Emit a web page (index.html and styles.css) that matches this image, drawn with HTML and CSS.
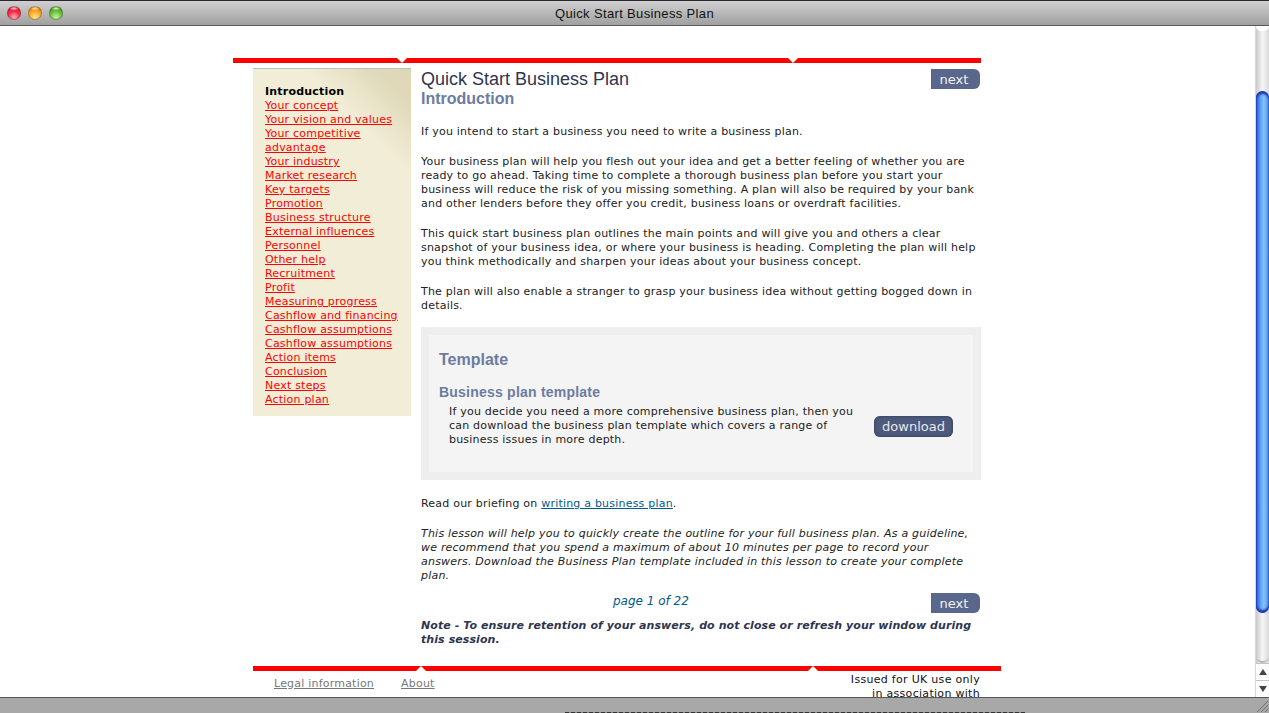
FILE: index.html
```html
<!DOCTYPE html>
<html lang="en">
  <head>
    <meta charset="UTF-8" />
    <title>Quick Start Business Plan</title>
    <link rel="stylesheet" href="styles.css">
  </head>
  <body>
    <header class="titlebar">
      <div class="traffic">
        <span class="light light-red"></span>
        <span class="light light-amber"></span>
        <span class="light light-green"></span>
      </div>
      <div class="window-title">Quick Start Business Plan</div>
    </header>

    <div class="viewport">
      <div class="page">
        <div class="rule rule-top">
          <span class="notch notch-down notch-a"></span>
          <span class="notch notch-down notch-b"></span>
        </div>

        <div class="columns">
          <nav class="sidebar">
            <div class="current">Introduction</div>
            <a href="#">Your concept</a>
            <a href="#">Your vision and values</a>
            <a href="#">Your competitive advantage</a>
            <a href="#">Your industry</a>
            <a href="#">Market research</a>
            <a href="#">Key targets</a>
            <a href="#">Promotion</a>
            <a href="#">Business structure</a>
            <a href="#">External influences</a>
            <a href="#">Personnel</a>
            <a href="#">Other help</a>
            <a href="#">Recruitment</a>
            <a href="#">Profit</a>
            <a href="#">Measuring progress</a>
            <a href="#">Cashflow and financing</a>
            <a href="#">Cashflow assumptions</a>
            <a href="#">Cashflow assumptions</a>
            <a href="#">Action items</a>
            <a href="#">Conclusion</a>
            <a href="#">Next steps</a>
            <a href="#">Action plan</a>
          </nav>

          <main class="content">
            <div class="content-head">
              <div class="headings">
                <h1>Quick Start Business Plan</h1>
                <h2>Introduction</h2>
              </div>
              <a href="#" class="next-button">next</a>
            </div>

            <p class="first">If you intend to start a business you need to write a business plan.</p>
            <p>Your business plan will help you flesh out your idea and get a better feeling of whether you are ready to go ahead. Taking time to complete a thorough business plan before you start your business will reduce the risk of you missing something. A plan will also be required by your bank and other lenders before they offer you credit, business loans or overdraft facilities.</p>
            <p>This quick start business plan outlines the main points and will give you and others a clear snapshot of your business idea, or where your business is heading. Completing the plan will help you think methodically and sharpen your ideas about your business concept.</p>
            <p>The plan will also enable a stranger to grasp your business idea without getting bogged down in details.</p>

            <section class="template-box">
              <div class="template-inner">
                <h3>Template</h3>
                <h4>Business plan template</h4>
                <div class="template-row">
                  <p class="template-text">If you decide you need a more comprehensive business plan, then you can download the business plan template which covers a range of business issues in more depth.</p>
                  <a href="#" class="download-button">download</a>
                </div>
              </div>
            </section>

            <p class="briefing">Read our briefing on <a href="#" class="blue-link">writing a business plan</a>.</p>
            <p class="lesson">This lesson will help you to quickly create the outline for your full business plan. As a guideline, we recommend that you spend a maximum of about 10 minutes per page to record your answers. Download the Business Plan template included in this lesson to create your complete plan.</p>

            <div class="pager">
              <span class="page-count">page 1 of 22</span>
              <a href="#" class="next-button">next</a>
            </div>
            <p class="note">Note - To ensure retention of your answers, do not close or refresh your window during this session.</p>
          </main>
        </div>

        <footer class="footer">
          <div class="rule rule-bottom">
            <span class="notch notch-up notch-c"></span>
            <span class="notch notch-up notch-d"></span>
          </div>
          <div class="footer-row">
            <div class="footer-links">
              <a href="#">Legal information</a>
              <a href="#">About</a>
            </div>
            <div class="issued">Issued for UK use only<br>in association with</div>
          </div>
        </footer>
      </div>

      <div class="scrollbar">
        <div class="track">
          <div class="track-cap"></div>
          <div class="thumb"></div>
          <div class="track-end"></div>
        </div>
        <div class="arrow-btn"><span class="arrow-up"></span></div>
        <div class="arrow-btn"><span class="arrow-down"></span></div>
      </div>
    </div>

    <div class="statusbar">
      <div class="peek"></div>
      <svg class="grip" width="12" height="12" viewBox="0 0 12 12">
        <path d="M1 12L12 1M5 12L12 5M9 12L12 9" stroke="#6f6f6f" stroke-width="1" fill="none" />
      </svg>
    </div>
  </body>
</html>
```

FILE: styles.css
```css
* {
  margin: 0;
  padding: 0;
  box-sizing: border-box;
}

html,
body {
  height: 100%;
  overflow: hidden;
}

body {
  display: flex;
  flex-direction: column;
  background: #fff;
  color: #222;
  font-family: "DejaVu Sans", Verdana, sans-serif;
  font-size: 11px;
  line-height: 14px;
  letter-spacing: 0.21px;
}

/* window chrome */
.titlebar {
  position: relative;
  height: 26px;
  flex: none;
  display: flex;
  align-items: center;
  justify-content: center;
  background: linear-gradient(#d0d0d0, #a0a0a0);
  border-top: 1px solid #2a2433;
  border-bottom: 1px solid #55565a;
}

.window-title {
  font-family: "Liberation Sans", Arial, sans-serif;
  font-size: 13px;
  color: #111;
  letter-spacing: 0.35px;
  margin-top: 1px;
}

.traffic {
  position: absolute;
  left: 7px;
  top: 5px;
  display: flex;
  gap: 7px;
}

.light {
  width: 14px;
  height: 14px;
  border-radius: 50%;
  border: 1px solid rgba(70, 70, 70, 0.4);
}

.light-red {
  background: radial-gradient(ellipse 5px 2px at 50% 12%, #ffd0d8, transparent),
    radial-gradient(circle at 50% 85%, #ffb0b8 0, #ff2a4a 50%, #d0102c 90%);
}

.light-amber {
  background: radial-gradient(ellipse 5px 2px at 50% 12%, #ffe6b0, transparent),
    radial-gradient(circle at 50% 85%, #ffe98a 0, #fba21f 55%, #d07a10 90%);
}

.light-green {
  background: radial-gradient(ellipse 5px 2px at 50% 12%, #d8f5c0, transparent),
    radial-gradient(circle at 50% 85%, #c6f09a 0, #62bb34 55%, #3f8f22 90%);
}

.viewport {
  flex: 1;
  min-height: 0;
  display: flex;
  overflow: hidden;
}

.statusbar {
  position: relative;
  height: 16px;
  flex: none;
  background: #a8a8a8;
  border-top: 1px solid #55565a;
}

/* sliver of whatever sits behind the window */
.peek {
  position: absolute;
  left: 565px;
  bottom: 0;
  width: 460px;
  height: 1px;
  background: repeating-linear-gradient(90deg, #333 0, #333 4px, #8a8a8a 4px, #8a8a8a 6px);
}

.grip {
  position: absolute;
  right: 1px;
  bottom: 1px;
}

/* scrollbar */
.scrollbar {
  width: 14px;
  margin-left: auto;
  flex: none;
  display: flex;
  flex-direction: column;
  background: #fff;
  border-left: 1px solid #d8d8d8;
}

.track {
  flex: 1;
  display: flex;
  flex-direction: column;
  background: linear-gradient(90deg, #c9c9c9, #f6f6f6 50%, #d8d8d8);
}

.track-cap {
  height: 5px;
  background: #fff;
  border-radius: 0 0 6px 6px;
}

.thumb {
  height: 522px;
  margin-top: 60px;
  border-radius: 7px;
  background: linear-gradient(90deg, #2a4ed0, #5aa4f4 35%, #86c2fa 60%, #4a90ec);
  box-shadow: inset 0 3px 2px #2437b0, inset 0 -3px 2px #2437b0;
}

.track-end {
  flex: 1;
  border-radius: 0 0 7px 7px;
  border-bottom: 2px solid #b8b8b8;
}

.arrow-btn {
  height: 17px;
  display: flex;
  align-items: center;
  justify-content: center;
  border-top: 1px solid #c4c4c4;
}

.arrow-up {
  border: 4px solid transparent;
  border-top: 0;
  border-bottom: 6px solid #444;
}

.arrow-down {
  border: 4px solid transparent;
  border-bottom: 0;
  border-top: 6px solid #444;
}

/* page */
.page {
  width: 768px;
  margin-left: 233px;
  padding-top: 32px;
  flex: none;
}

.rule {
  position: relative;
  height: 5px;
  background: #ff0000;
}

.rule-top {
  width: 748px;
}

.notch {
  position: absolute;
  width: 0;
  height: 0;
  border-left: 5px solid transparent;
  border-right: 5px solid transparent;
}

.notch-down {
  top: 0;
  border-top: 5px solid #fff;
}

.notch-up {
  bottom: 0;
  border-bottom: 5px solid #fff;
}

.notch-a {
  left: 164px;
}

.notch-b {
  left: 555px;
}

.notch-c {
  left: 163px;
}

.notch-d {
  left: 555px;
}

.columns {
  display: flex;
  align-items: flex-start;
  margin-top: 5px;
  margin-left: 20px;
  gap: 10px;
}

/* sidebar */
.sidebar {
  width: 158px;
  height: 348px;
  padding: 16px 12px 0;
  flex: none;
  border-top: 1px solid #b9c0c4;
  background: linear-gradient(225deg, #ddd7b6 0, #e0dabb 28px, #f2edd6 75px);
}

.sidebar .current {
  font-weight: bold;
  color: #000;
}

.sidebar a {
  display: block;
  color: #ff0000;
}

/* main column */
.content {
  width: 560px;
  flex: none;
}

.content-head {
  display: flex;
  justify-content: space-between;
  align-items: flex-start;
  padding-top: 1px;
  margin-bottom: 16px;
}

.headings {
  padding-top: 1px;
  letter-spacing: 0;
}

h1 {
  font-family: "Liberation Sans", Arial, sans-serif;
  font-size: 18px;
  font-weight: normal;
  line-height: 19px;
  color: #2f3550;
}

h2 {
  font-family: "Liberation Sans", Arial, sans-serif;
  font-size: 16px;
  font-weight: bold;
  line-height: 20px;
  color: #6b7ca0;
}

.next-button {
  display: block;
  width: 49px;
  height: 20px;
  margin-right: 1px;
  padding-right: 3px;
  background: #5a678c;
  border-radius: 0 6px 6px 0;
  color: #f2f2f2;
  font-size: 13px;
  line-height: 21px;
  letter-spacing: 0;
  text-align: center;
  text-decoration: none;
}

.content p {
  margin-top: 16px;
}

.content p.first {
  margin-top: 0;
}

.template-box {
  margin-top: 14px;
  padding: 8px;
  background: #efeeee;
}

.template-inner {
  height: 137px;
  padding: 15px 10px 0;
  background: #f4f4f4;
}

h3 {
  font-family: "Liberation Sans", Arial, sans-serif;
  font-size: 16px;
  font-weight: bold;
  line-height: 20px;
  letter-spacing: 0;
  color: #6b7ca0;
}

h4 {
  margin-top: 14px;
  font-family: "Liberation Sans", Arial, sans-serif;
  font-size: 14px;
  font-weight: bold;
  line-height: 17px;
  letter-spacing: 0.22px;
  color: #6b7ca0;
}

.template-row {
  display: flex;
  align-items: center;
  margin-top: 4px;
  padding-left: 10px;
}

.content p.template-text {
  width: 415px;
  margin-top: 0;
  flex: none;
}

.download-button {
  display: block;
  width: 79px;
  height: 21px;
  margin-left: 10px;
  background: #4d5a7c;
  border-radius: 6px;
  box-shadow: inset 0 0 3px #2c3550;
  color: #e6e8ee;
  font-size: 13px;
  line-height: 21px;
  letter-spacing: 0;
  text-align: center;
  text-decoration: none;
}

.content p.briefing {
  margin-top: 17px;
}

.blue-link {
  color: #005a8c;
}

.content p.lesson {
  font-style: italic;
}

.pager {
  position: relative;
  display: flex;
  justify-content: flex-end;
  margin-top: 10px;
  height: 20px;
}

.page-count {
  position: absolute;
  left: 192px;
  top: 1px;
  color: #005a8c;
  font-size: 12px;
  font-style: italic;
  letter-spacing: 0;
}

.content p.note {
  margin-top: 6px;
  color: #2f3550;
  font-weight: bold;
  font-style: italic;
  letter-spacing: 0.08px;
}

/* footer */
.footer {
  margin-top: 19px;
  margin-left: 20px;
}

.footer-row {
  display: flex;
  justify-content: space-between;
  padding: 1px 21px 0;
}

.footer-links {
  display: flex;
  gap: 27px;
  padding-top: 5px;
}

.footer-links a {
  color: #777;
}

.issued {
  padding-top: 1px;
  color: #111;
  letter-spacing: 0.3px;
  text-align: right;
}
```
